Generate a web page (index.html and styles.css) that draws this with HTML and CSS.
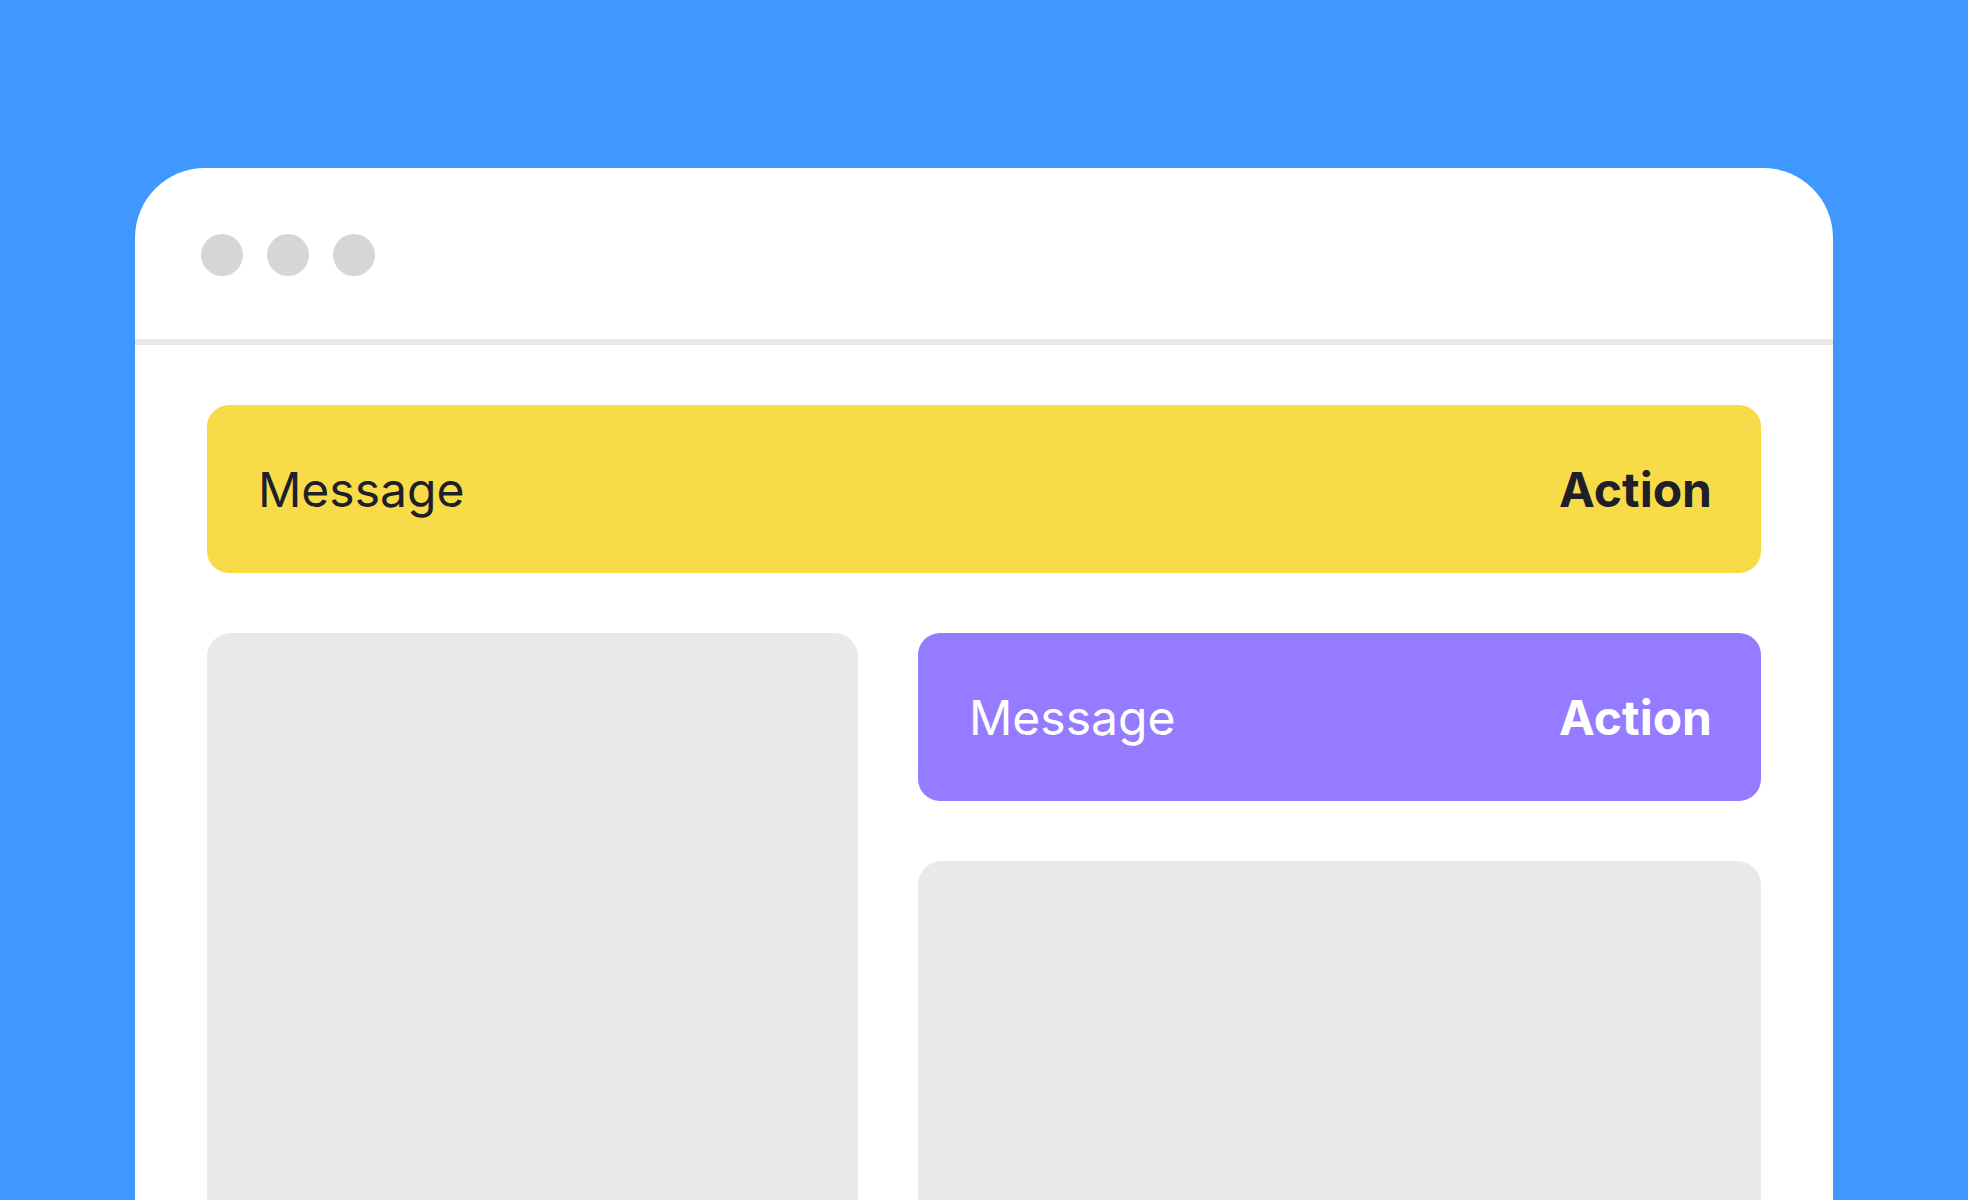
FILE: index.html
```html
<!DOCTYPE html>
<html lang="en">
<head>
    <meta charset="UTF-8">
    <meta name="viewport" content="width=device-width, initial-scale=1.0">
    <title>Snackbar</title>
    <link rel="stylesheet" href="styles.css">
</head>
<body>
    <div class="window">
        <div class="titlebar">
            <span class="dot"></span>
            <span class="dot"></span>
            <span class="dot"></span>
        </div>
        <div class="content">
            <div class="snackbar snackbar-yellow">
                <span class="message">Message</span>
                <span class="action">Action</span>
            </div>
            <div class="columns">
                <div class="placeholder placeholder-tall"></div>
                <div class="side">
                    <div class="snackbar snackbar-purple">
                        <span class="message">Message</span>
                        <span class="action">Action</span>
                    </div>
                    <div class="placeholder placeholder-fill"></div>
                </div>
            </div>
        </div>
    </div>
</body>
</html>
```

FILE: styles.css
```css
html, body {
    height: 100%;
}

body {
    margin: 0;
    padding: 168px 135px 0;
    background-color: #4098ff;
    font-family: Inter, "Noto Sans", sans-serif;
    overflow: hidden;
    box-sizing: border-box;
}

.window {
    background: #fff;
    border-radius: 70px 70px 0 0;
    height: 1200px;
}

.titlebar {
    display: flex;
    align-items: center;
    gap: 24px;
    height: 177px;
    padding: 3px 0 0 66px;
    border-bottom: 6px solid #e9e9e9;
    box-sizing: border-box;
}

.dot {
    width: 42px;
    height: 42px;
    border-radius: 50%;
    background-color: #d6d6d8;
}

.content {
    padding: 60px 72px 0;
    display: flex;
    flex-direction: column;
    gap: 60px;
}

.snackbar {
    display: flex;
    justify-content: space-between;
    align-items: center;
    height: 168px;
    padding: 0 49px 0 51px;
    border-radius: 22px;
    font-size: 48px;
    box-sizing: border-box;
}

.snackbar-yellow {
    background-color: #f8db48;
    color: #1e1f28;
}

.snackbar-purple {
    background-color: #957bff;
    color: #fff;
}

.action {
    font-weight: 700;
}

.columns {
    display: grid;
    grid-template-columns: 651px 1fr;
    gap: 60px;
}

.side {
    display: flex;
    flex-direction: column;
    gap: 60px;
}

.placeholder {
    background-color: #e9e9eb;
    border-radius: 24px;
}

.placeholder-tall {
    height: 800px;
}

.placeholder-fill {
    height: 572px;
}
```
